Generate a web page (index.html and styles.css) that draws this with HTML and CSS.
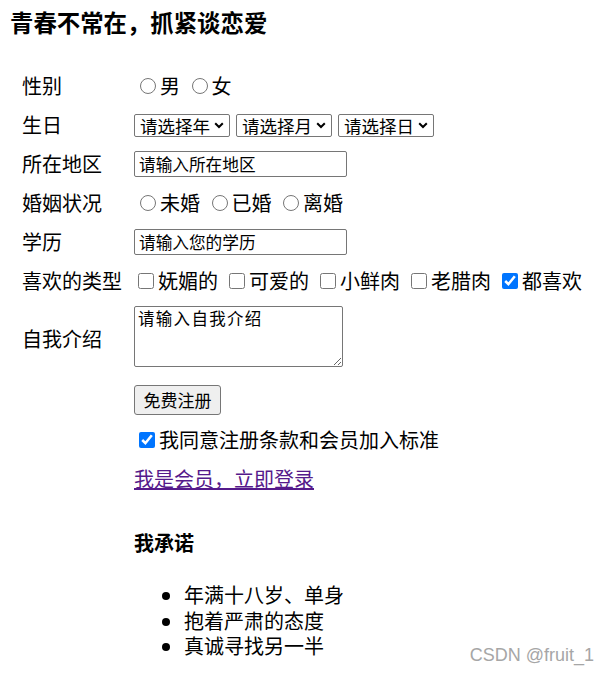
FILE: index.html
```html
<!DOCTYPE html>
<html lang="zh">
<head>
<meta charset="utf-8">
<title>青春不常在，抓紧谈恋爱</title>
<link rel="stylesheet" href="styles.css">
</head>
<body>
<div class="page">
  <h3 class="title">青春不常在，抓紧谈恋爱</h3>
  <form class="form">
    <div class="label">性别</div>
    <div class="field">
      <label class="opt"><input type="radio" name="sex" class="radio">男</label>
      <label class="opt"><input type="radio" name="sex" class="radio">女</label>
    </div>

    <div class="label">生日</div>
    <div class="field selects">
      <span class="sel-wrap"><select class="sel"><option>请选择年</option></select><svg class="chev" width="10" height="7" viewBox="0 0 10 7"><polyline points="1.2,1.2 5,5 8.8,1.2" fill="none" stroke="#000" stroke-width="2"/></svg></span>
      <span class="sel-wrap"><select class="sel"><option>请选择月</option></select><svg class="chev" width="10" height="7" viewBox="0 0 10 7"><polyline points="1.2,1.2 5,5 8.8,1.2" fill="none" stroke="#000" stroke-width="2"/></svg></span>
      <span class="sel-wrap"><select class="sel"><option>请选择日</option></select><svg class="chev" width="10" height="7" viewBox="0 0 10 7"><polyline points="1.2,1.2 5,5 8.8,1.2" fill="none" stroke="#000" stroke-width="2"/></svg></span>
    </div>

    <div class="label">所在地区</div>
    <div class="field"><input type="text" class="text" value="请输入所在地区"></div>

    <div class="label">婚姻状况</div>
    <div class="field">
      <label class="opt"><input type="radio" name="m" class="radio">未婚</label>
      <label class="opt"><input type="radio" name="m" class="radio">已婚</label>
      <label class="opt"><input type="radio" name="m" class="radio">离婚</label>
    </div>

    <div class="label">学历</div>
    <div class="field"><input type="text" class="text" value="请输入您的学历"></div>

    <div class="label">喜欢的类型</div>
    <div class="field">
      <label class="opt opt-wide"><input type="checkbox" class="check">妩媚的</label>
      <label class="opt opt-wide"><input type="checkbox" class="check">可爱的</label>
      <label class="opt opt-wide"><input type="checkbox" class="check">小鲜肉</label>
      <label class="opt opt-wide"><input type="checkbox" class="check">老腊肉</label>
      <label class="opt opt-wide"><input type="checkbox" class="check" checked>都喜欢</label>
    </div>

    <div class="label">自我介绍</div>
    <div class="field area-cell"><textarea class="area">请输入自我介绍</textarea></div>

    <div class="label"></div>
    <div class="field"><button type="button" class="btn">免费注册</button></div>

    <div class="label"></div>
    <div class="field">
      <label class="opt"><input type="checkbox" class="check agree" checked>我同意注册条款和会员加入标准</label>
    </div>

    <div class="label"></div>
    <div class="field"><a href="#" class="link">我是会员，立即登录</a></div>

    <div class="label"></div>
    <div class="promise">
      <h4 class="promise-title">我承诺</h4>
      <ul class="promise-list">
        <li>年满十八岁、单身</li>
        <li>抱着严肃的态度</li>
        <li>真诚寻找另一半</li>
      </ul>
    </div>
  </form>
  <div class="watermark">CSDN @fruit_1</div>
</div>
</body>
</html>
```

FILE: styles.css
```css
html, body {
  margin: 0;
  padding: 0;
  background: #fff;
}
body {
  font-family: "Noto Sans CJK SC", "Microsoft YaHei", sans-serif;
  font-size: 20px;
  line-height: 26.4px;
  color: #000;
}
.page {
  position: relative;
  width: 611px;
  height: 673px;
  padding: 0 10px;
  box-sizing: border-box;
  overflow: hidden;
}
.title {
  margin: 7px 0 35.1px;
  font-size: 23.4px;
  line-height: 30.9px;
  font-weight: bold;
}
.form {
  display: grid;
  grid-template-columns: 100px auto;
  column-gap: 12px;
  row-gap: 12.5px;
  align-items: center;
  margin-left: 12px;
}
.label {
  white-space: nowrap;
}
.field {
  display: flex;
  align-items: center;
  min-height: 26.4px;
}
.opt {
  display: flex;
  align-items: center;
  margin-right: 5.5px;
  white-space: nowrap;
}
.opt-wide {
  margin-right: 7px;
}
.radio {
  width: 16px;
  height: 16px;
  margin: 0 4px 0 6px;
}
.check {
  width: 16px;
  height: 16px;
  margin: 0 4px 0 4px;
}
.agree {
  margin-left: 5px;
}
.selects {
  gap: 6px;
}
.sel-wrap {
  position: relative;
  display: block;
  width: 96px;
  height: 23px;
}
.sel {
  appearance: none;
  -webkit-appearance: none;
  display: block;
  width: 96px;
  height: 23px;
  box-sizing: border-box;
  margin: 0;
  padding: 0 0 0 5px;
  border: 1px solid #767676;
  border-radius: 2px;
  background: #fff;
  font-family: "Noto Sans CJK SC", "Microsoft YaHei", sans-serif;
  font-size: 17.5px;
  line-height: 21px;
  color: #000;
}
.chev {
  position: absolute;
  right: 6px;
  top: 8px;
  pointer-events: none;
}
.text {
  width: 213px;
  height: 26px;
  box-sizing: border-box;
  padding: 0 4px;
  border: 1px solid #767676;
  border-radius: 2px;
  font-family: "Noto Sans CJK SC", "Microsoft YaHei", sans-serif;
  font-size: 16.67px;
  color: #000;
}
.area-cell {
  padding-bottom: 4.6px;
}
.area {
  width: 209px;
  height: 61px;
  box-sizing: border-box;
  padding: 1px 3px;
  border: 1px solid #767676;
  border-radius: 2px;
  font-family: "Noto Sans CJK SC", monospace;
  font-size: 16.5px;
  line-height: 20px;
  letter-spacing: 1.3px;
  font-weight: normal;
  color: #000;
  margin: 0;
}
.btn {
  height: 30px;
  width: 87px;
  padding: 0;
  box-sizing: border-box;
  font-family: "Noto Sans CJK SC", "Microsoft YaHei", sans-serif;
  font-size: 17px;
  color: #000;
  background: #efefef;
  border: 1px solid #767676;
  border-radius: 3px;
}
.link {
  color: #551a8b;
  text-decoration: underline;
}
.promise {
  padding-top: 25.6px;
}
.promise-title {
  margin: 0 0 25.6px;
  font-size: 20px;
  line-height: 26.4px;
  font-weight: bold;
}
.promise-list {
  margin: 0;
  padding-left: 50px;
}
.promise-list li {
  line-height: 25.5px;
}
.watermark {
  position: absolute;
  right: 17px;
  top: 645px;
  font-family: "Liberation Sans", Arial, sans-serif;
  font-size: 18px;
  line-height: 21px;
  color: #a6a6a6;
}
```
